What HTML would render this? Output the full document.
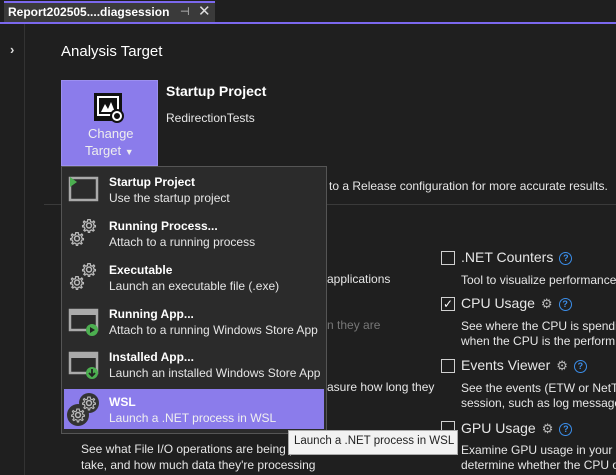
<!DOCTYPE html>
<html><head><style>
*{margin:0;padding:0;box-sizing:border-box}
body{width:616px;height:475px;background:#1f1f1f;font-family:"Liberation Sans",sans-serif;color:#e6e6e6;position:relative;overflow:hidden;font-size:12px}
.a{position:absolute;white-space:nowrap}
.mi .t{font-weight:bold;color:#fff}
.cb{position:absolute;width:14px;height:14px;border:1px solid #d0d0d0;background:#1f1f1f}
.q{display:inline-block;width:13px;height:13px;border:1.5px solid #3b8eea;border-radius:50%;color:#3b8eea;font-size:9px;text-align:center;line-height:10px;font-weight:bold;vertical-align:1px;margin-left:6px}
.g{color:#bbb;font-size:13px;margin-left:6px}
</style></head><body>
<svg width="0" height="0" style="position:absolute"><defs>
<g id="gear"><path d="M0 -7 L1.5 -7 L2 -4.5 L4 -3.7 L6 -5.2 L7 -4 L5.5 -2 L6.3 0 L8 0.5 L8 2 L5.8 2.4 L5 4.4 L6.4 6.3 L5.2 7.3 L3.2 6 L1.2 6.7 L0.8 9 L-0.8 9 L-1.2 6.7 L-3.2 6 L-5.2 7.3 L-6.4 6.3 L-5 4.4 L-5.8 2.4 L-8 2 L-8 0.5 L-6.3 0 L-5.5 -2 L-7 -4 L-6 -5.2 L-4 -3.7 L-2 -4.5 L-1.5 -7Z" transform="translate(0,-1)"/></g>
</defs></svg>
<div class="a" style="left:0;top:0;width:616px;height:22px;background:#1f1f1f"></div>
<div class="a" style="left:4px;top:1px;width:211px;height:21px;background:#3a3a3a;border-top:2px solid #7b68ee"></div>
<div class="a" style="left:8px;top:5px;font-size:12px;font-weight:bold;color:#fff">Report202505....diagsession</div>
<div class="a" style="left:180px;top:5px;font-size:11px;color:#ccc">⊣</div>
<div class="a" style="left:198px;top:2px;font-size:15px;color:#ddd">✕</div>
<div class="a" style="left:0;top:22px;width:616px;height:2px;background:#7b68ee"></div>
<div class="a" style="left:24px;top:24px;width:1px;height:451px;background:#333"></div>
<div class="a" style="left:10px;top:42px;font-size:13px;font-weight:bold;color:#ddd">›</div>
<div class="a" style="left:61px;top:43px;font-size:15px;color:#fff">Analysis Target</div>
<div class="a" style="left:61px;top:80px;width:97px;height:86px;background:#8b7ceb;border:1px solid #9c8ff0"></div>
<svg class="a" style="left:93px;top:92px" width="32" height="32" viewBox="0 0 32 32"><rect x="1" y="1" width="28" height="28" fill="#111"/><rect x="4" y="4" width="22" height="20" fill="#fff"/><rect x="6" y="6" width="18" height="16" fill="#111"/><path d="M8 20 L12 12 L15 17 L18 10 L22 20Z" fill="#fff"/><circle cx="24" cy="24" r="7" fill="#111"/><circle cx="24" cy="24" r="4" fill="none" stroke="#fff" stroke-width="2"/></svg>
<div class="a" style="left:88px;top:126px;font-size:13px;color:#eee">Change</div>
<div class="a" style="left:85px;top:143px;font-size:13px;color:#eee">Target <span style="font-size:9px">▼</span></div>
<div class="a" style="left:166px;top:83px;font-size:14px;font-weight:bold;color:#fff">Startup Project</div>
<div class="a" style="left:166px;top:111px;color:#e6e6e6">RedirectionTests</div>
<div class="a" style="left:329px;top:179px;color:#e6e6e6">to a Release configuration for more accurate results.</div>
<div class="a" style="left:44px;top:204px;width:572px;height:1px;background:#3a3a3a"></div>
<div class="a" style="left:327px;top:272px">applications</div>
<div class="a" style="left:327px;top:318px;color:#777">n they are</div>
<div class="a" style="left:327px;top:380px">asure how long they</div>
<div class="a" style="left:81px;top:442px">See what File I/O operations are being p</div>
<div class="a" style="left:81px;top:458px">take, and how much data they're processing</div>
<div class="cb" style="left:441px;top:251px"></div>
<div class="a" style="left:461px;top:249px;font-size:14px">.NET Counters<span class="q">?</span></div>
<div class="a" style="left:461px;top:273px">Tool to visualize performance</div>
<div class="cb" style="left:441px;top:297px;text-align:center;line-height:12px;font-size:12px;color:#fff">✓</div>
<div class="a" style="left:461px;top:295px;font-size:14px">CPU Usage<span class="g">⚙</span><span class="q">?</span></div>
<div class="a" style="left:461px;top:319px">See where the CPU is spendin</div>
<div class="a" style="left:461px;top:334px">when the CPU is the perform</div>
<div class="cb" style="left:441px;top:359px"></div>
<div class="a" style="left:461px;top:357px;font-size:14px">Events Viewer<span class="g">⚙</span><span class="q">?</span></div>
<div class="a" style="left:461px;top:381px">See the events (ETW or NetTr</div>
<div class="a" style="left:461px;top:396px">session, such as log message</div>
<div class="cb" style="left:441px;top:421px"></div>
<div class="a" style="left:461px;top:420px;font-size:14px">GPU Usage<span class="g">⚙</span><span class="q">?</span></div>
<div class="a" style="left:461px;top:443px">Examine GPU usage in your D</div>
<div class="a" style="left:461px;top:458px">determine whether the CPU o</div>
<div class="a" style="left:61px;top:166px;width:266px;height:268px;background:#2b2b2b;border:1px solid #555"></div>
<div class="a" style="left:64px;top:389px;width:260px;height:40px;background:#8b7ceb"></div>
<svg class="a" style="left:68px;top:175px" width="32" height="30"><rect x="2" y="3" width="27" height="22" fill="none" stroke="#aaa" stroke-width="2.5"/><path d="M2 2 L9 7 L2 12Z" fill="#4caf50"/></svg>
<div class="a mi" style="left:109px;top:175px"><div class="t">Startup Project</div><div style="margin-top:2px">Use the startup project</div></div>
<svg class="a" style="left:68px;top:216px" width="32" height="32"><g fill="none" stroke="#bbb" stroke-width="1.6"><use href="#gear" transform="translate(21,10) scale(0.8)"/><use href="#gear" transform="translate(9,23) scale(0.8)"/></g><circle cx="21" cy="9.5" r="2.5" fill="none" stroke="#bbb" stroke-width="1.5"/><circle cx="9" cy="22.5" r="2.5" fill="none" stroke="#bbb" stroke-width="1.5"/></svg>
<div class="a mi" style="left:109px;top:219px"><div class="t">Running Process...</div><div style="margin-top:2px">Attach to a running process</div></div>
<svg class="a" style="left:68px;top:260px" width="32" height="32"><g fill="none" stroke="#bbb" stroke-width="1.6"><use href="#gear" transform="translate(21,10) scale(0.8)"/><use href="#gear" transform="translate(9,23) scale(0.8)"/></g><circle cx="21" cy="9.5" r="2.5" fill="none" stroke="#bbb" stroke-width="1.5"/><circle cx="9" cy="22.5" r="2.5" fill="none" stroke="#bbb" stroke-width="1.5"/></svg>
<div class="a mi" style="left:109px;top:263px"><div class="t">Executable</div><div style="margin-top:2px">Launch an executable file (.exe)</div></div>
<svg class="a" style="left:68px;top:307px" width="32" height="30"><rect x="2" y="3" width="27" height="20" fill="none" stroke="#aaa" stroke-width="2.5"/><rect x="2" y="3" width="27" height="5" fill="#aaa"/><circle cx="24" cy="23" r="6" fill="#4caf50"/><path d="M22 20 L27 23 L22 26Z" fill="#222"/></svg>
<div class="a mi" style="left:109px;top:307px"><div class="t">Running App...</div><div style="margin-top:2px">Attach to a running Windows Store App</div></div>
<svg class="a" style="left:68px;top:350px" width="32" height="30"><rect x="2" y="3" width="27" height="20" fill="none" stroke="#aaa" stroke-width="2.5"/><rect x="2" y="3" width="27" height="5" fill="#aaa"/><circle cx="24" cy="23" r="6" fill="#4caf50"/><path d="M24 19 V26 M21 23 L24 26 L27 23" stroke="#222" stroke-width="1.8" fill="none"/></svg>
<div class="a mi" style="left:109px;top:350px"><div class="t">Installed App...</div><div style="margin-top:2px">Launch an installed Windows Store App</div></div>
<svg class="a" style="left:66px;top:391px" width="36" height="36"><circle cx="23" cy="12" r="10" fill="#333"/><circle cx="12" cy="24" r="11" fill="#333"/><g fill="none" stroke="#bbb" stroke-width="1.4"><use href="#gear" transform="translate(23,12.5) scale(0.8)"/><use href="#gear" transform="translate(12,24.5) scale(0.8)"/></g><circle cx="23" cy="12" r="2.5" fill="none" stroke="#bbb" stroke-width="1.5"/><circle cx="12" cy="24" r="2.5" fill="none" stroke="#bbb" stroke-width="1.5"/></svg>
<div class="a mi" style="left:109px;top:395px"><div class="t">WSL</div><div style="margin-top:2px;color:#f0f0f0">Launch a .NET process in WSL</div></div>
<div class="a" style="left:288px;top:430px;width:170px;height:25px;background:#f2f2f2;border:1px solid #aaa"></div>
<div class="a" style="left:294px;top:435px;color:#222;font-size:11.5px">Launch a .NET process in WSL</div>
</body></html>
